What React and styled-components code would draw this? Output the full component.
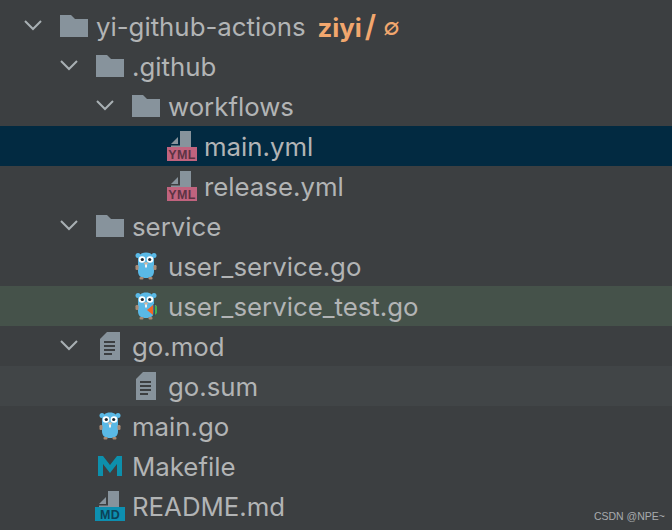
import React from "react";
import styled, { createGlobalStyle } from "styled-components";

const Global = createGlobalStyle`
  html, body { margin: 0; padding: 0; background: #3c3f41; }
`;

const Tree = styled.div`
  width: 672px;
  height: 530px;
  overflow: hidden;
  position: relative;
  background: #3c3f41;
  font-family: Inter, "Liberation Sans", sans-serif;
  font-size: 25.8px;
  color: #b2b4b5;
  padding-top: 6px;
  box-sizing: border-box;
`;

const Row = styled.div`
  height: 40px;
  display: flex;
  align-items: center;
  padding-left: ${(p) => 20 + p.$depth * 36}px;
  background: ${(p) =>
    p.$tone === "selected" ? "#022a41" : p.$tone === "test" ? "#45524a" : p.$tone === "hover" ? "#414547" : "transparent"};
  white-space: nowrap;
`;

const ChevronSlot = styled.span`
  width: 26px;
  display: flex;
  justify-content: center;
  flex: none;
`;

const IconSlot = styled.span`
  width: 50px;
  height: 40px;
  display: flex;
  align-items: center;
  justify-content: center;
  flex: none;
  padding-left: 6px;
  box-sizing: border-box;
`;

const Label = styled.span`
  line-height: 40px;
  padding-top: 2px;
`;

const Branch = styled.span`
  margin-left: 12px;
  padding-top: 2px;
  color: #f2a76e;
  font-weight: 700;
`;

const Slash = styled.span`
  margin-left: 3px;
  color: #f2a76e;
  font-weight: 600;
  font-size: 30px;
`;

const Empty = styled.span`
  margin-left: 7px;
  color: #f2a76e;
  font-size: 24px;
`;

const Watermark = styled.div`
  position: absolute;
  right: 7px;
  bottom: 8px;
  font-family: "Liberation Sans", sans-serif;
  font-size: 10.5px;
  color: #a8abad;
`;

const Chevron = () => (
  <svg width="18" height="12" viewBox="0 0 18 12">
    <path d="M1 1 L9 9 L17 1" fill="none" stroke="#a9b0b4" strokeWidth="2" />
  </svg>
);

const Folder = () => (
  <svg width="28" height="22" viewBox="0 0 28 22">
    <path d="M0 0 H11 L15 4 H28 V22 H0 Z" fill="#87939c" />
  </svg>
);

const TextFile = () => (
  <svg width="20" height="28" viewBox="0 0 20 28">
    <path d="M7 0 H20 V28 H0 V7 Z" fill="#87939c" />
    <path d="M4 10 H15 M4 14 H15 M4 18 H15 M4 22 H12" stroke="#3c3f41" strokeWidth="2" />
  </svg>
);

const Gopher = ({ test }) => (
  <svg width="22" height="28" viewBox="0 0 22 28">
    <circle cx="3" cy="3.5" r="2.5" fill="#5ab9e6" />
    <circle cx="19" cy="3.5" r="2.5" fill="#5ab9e6" />
    <path d="M3 19 V8 C3 3 6.5 0.5 11 0.5 C15.5 0.5 19 3 19 8 V19 C19 24 16 26 11 26 C6 26 3 24 3 19 Z" fill="#5ab9e6" />
    <rect x="0.5" y="13" width="3" height="5" rx="1.2" fill="#a98a74" />
    <rect x="18.5" y="13" width="3" height="5" rx="1.2" fill="#a98a74" />
    <rect x="4.5" y="25" width="4" height="2.5" rx="1" fill="#a98a74" />
    <rect x="13.5" y="25" width="4" height="2.5" rx="1" fill="#a98a74" />
    <circle cx="7" cy="7.5" r="3.3" fill="#fff" />
    <circle cx="15" cy="7.5" r="3.3" fill="#fff" />
    <circle cx="7.3" cy="7.5" r="1.6" fill="#1d2a33" />
    <circle cx="14.7" cy="7.5" r="1.6" fill="#1d2a33" />
    <ellipse cx="11" cy="11.5" rx="1.8" ry="1.2" fill="#d9b79c" />
    <rect x="10" y="12.5" width="2" height="3" fill="#f2f2f2" />
    {test && <path d="M18 13 V23 L12 18 Z" fill="#f26522" />}
    {test && <rect x="18.4" y="12" width="1.4" height="12" fill="#2e4a5c" />}
    {test && <path d="M20 13 V23 L25 18 Z" fill="#3fb34f" />}
  </svg>
);

const Badged = ({ tag, color, ink }) => (
  <svg width="30" height="30" viewBox="0 0 30 30">
    <path d="M4 13 L11 6 V13 Z" fill="#87939c" />
    <path d="M13 0 H24 V16 H4 V14.5 H13 Z" fill="#87939c" />
    <rect x="0" y="16" width="30" height="14" fill={color} />
    <text x="15" y="28" textAnchor="middle" fontFamily="'Liberation Sans', sans-serif" fontSize="12.5" fontWeight="700" letterSpacing="0.4" fill={ink}>
      {tag}
    </text>
  </svg>
);

const Make = () => (
  <svg width="24" height="20" viewBox="0 0 24 20">
    <path d="M0 20 V0 H5 L12 9 L19 0 H24 V20 H19 V8 L12 17 L5 8 V20 Z" fill="#0d90ac" />
  </svg>
);

const icons = {
  folder: <Folder />,
  text: <TextFile />,
  go: <Gopher />,
  goTest: <Gopher test />,
  yml: <Badged tag="YML" color="#c0637e" ink="#5d3344" />,
  md: <Badged tag="MD" color="#0d8fb0" ink="#0b4257" />,
  make: <Make />,
};

const rows = [
  { depth: 0, open: true, icon: "folder", label: "yi-github-actions", branch: true },
  { depth: 1, open: true, icon: "folder", label: ".github" },
  { depth: 2, open: true, icon: "folder", label: "workflows" },
  { depth: 3, icon: "yml", label: "main.yml", tone: "selected" },
  { depth: 3, icon: "yml", label: "release.yml" },
  { depth: 1, open: true, icon: "folder", label: "service" },
  { depth: 2, icon: "go", label: "user_service.go" },
  { depth: 2, icon: "goTest", label: "user_service_test.go", tone: "test" },
  { depth: 1, open: true, icon: "text", label: "go.mod" },
  { depth: 2, icon: "text", label: "go.sum", tone: "hover" },
  { depth: 1, icon: "go", label: "main.go" },
  { depth: 1, icon: "make", label: "Makefile" },
  { depth: 1, icon: "md", label: "README.md" },
];

export default function App() {
  return (
    <>
      <Global />
      <Tree>
        {rows.map((r) => (
          <Row key={r.label} $depth={r.depth} $tone={r.tone}>
            <ChevronSlot>{r.open && <Chevron />}</ChevronSlot>
            <IconSlot>{icons[r.icon]}</IconSlot>
            <Label>{r.label}</Label>
            {r.branch && (
              <>
                <Branch>ziyi</Branch>
                <Slash>/</Slash>
                <Empty>∅</Empty>
              </>
            )}
          </Row>
        ))}
        <Watermark>CSDN @NPE~</Watermark>
      </Tree>
    </>
  );
}
